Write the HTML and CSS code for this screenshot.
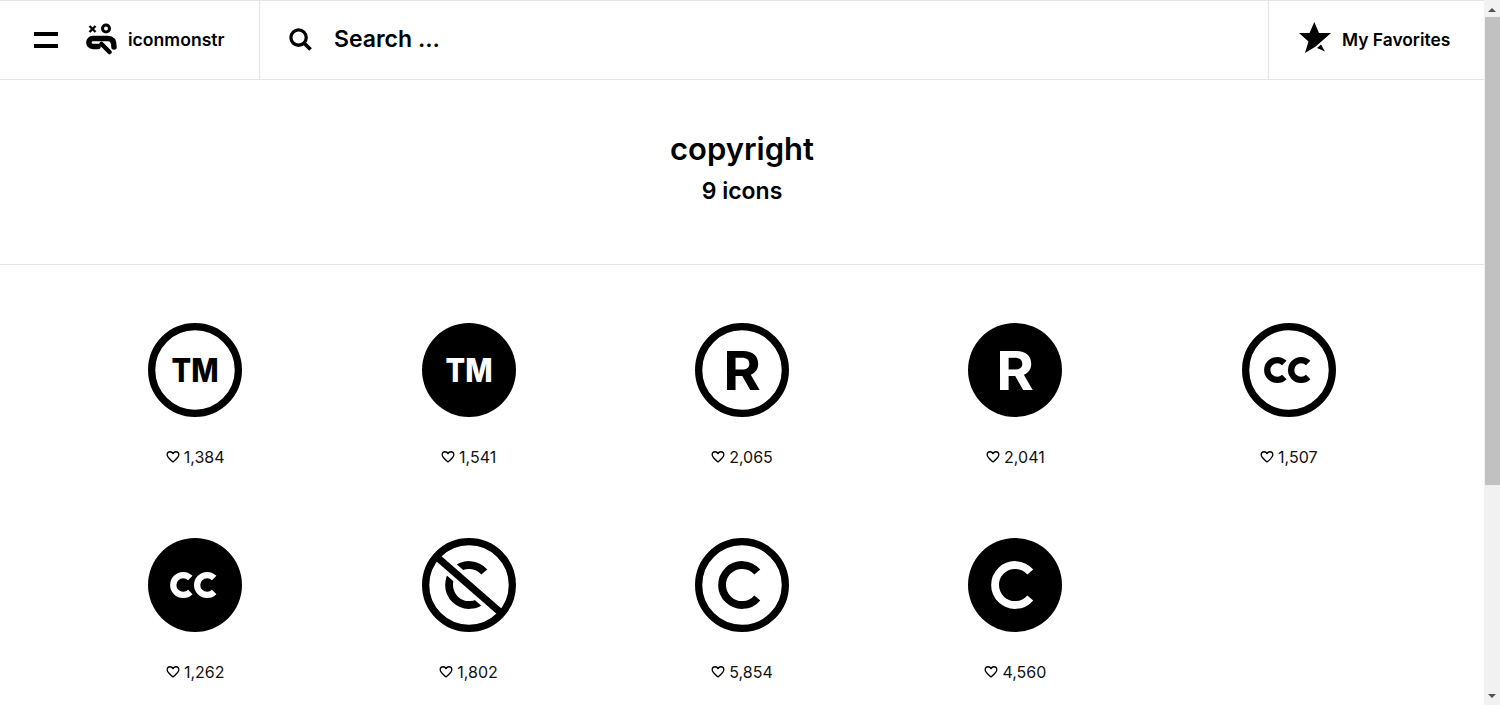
FILE: index.html
```html
<!DOCTYPE html>
<html lang="en">
<head>
    <meta charset="UTF-8">
    <meta name="viewport" content="width=device-width, initial-scale=1.0">
    <title>copyright - iconmonstr</title>
    <link rel="stylesheet" href="styles.css">
</head>
<body>
    <svg class="defs" width="0" height="0">
        <symbol id="heart" viewBox="0 0 24 24">
            <path d="M12 20.5C6 15.5 2 12.3 2 8.2 2 5 4.4 3 7 3c2 0 3.9 1 5 3.2C13.1 4 15 3 17 3c2.6 0 5 2 5 5.2 0 4.1-4 7.3-10 12.3z" fill="none" stroke="#000" stroke-width="2.2" stroke-linejoin="round"/>
        </symbol>
    </svg>

    <div class="page">
        <header class="topbar">
            <div class="brand">
                <button class="menu-btn" aria-label="Menu"></button>
                <a class="logo" href="#">
                    <svg viewBox="0 0 32 32" width="32" height="32">
                        <path d="M4.5 3l6 6M10.5 3l-6 6" stroke="#000" stroke-width="2.3" fill="none"/>
                        <circle cx="21" cy="5.5" r="3.5" stroke="#000" stroke-width="3" fill="none"/>
                        <path d="M29 24c0-5.5-2-8.500-6-8.500H8C2.500 15.500 2.500 23.500 8 23.500H13" stroke="#000" stroke-width="5.5" fill="none" stroke-linecap="round"/>
                        <path d="M16.5 21l8 8" stroke="#000" stroke-width="4.500" fill="none" stroke-linecap="round"/>
                    </svg>
                    <span>iconmonstr</span>
                </a>
            </div>
            <div class="search">
                <svg viewBox="0 0 24 24" width="23" height="23">
                    <circle cx="10" cy="10" r="8" stroke="#000" stroke-width="3.4" fill="none"/>
                    <path d="M15.5 15.5l7 7" stroke="#000" stroke-width="3.8" fill="none"/>
                </svg>
                <span>Search ...</span>
            </div>
            <a class="favorites" href="#">
                <svg class="star" viewBox="0 0 32 32" width="32" height="32">
                    <path d="M15.3 0L20 11H32L16.7 24.5 6 31 9.5 19.5 0 11H10.5z"/>
                    <path d="M22 22.5L26 29.5 18 26z"/>
                </svg>
                <span>My Favorites</span>
            </a>
        </header>

        <section class="title-block">
            <h1>copyright</h1>
            <h2>9 icons</h2>
        </section>

        <ul class="icon-grid">
            <li class="icon-item">
                <svg class="glyph" viewBox="0 0 24 24">
                    <circle class="ring" cx="12" cy="12" r="11.07"/>
                    <text class="mark mark-tm" x="12" y="15.15" textLength="12" lengthAdjust="spacingAndGlyphs">TM</text>
                </svg>
                <p class="likes"><svg><use href="#heart"/></svg>1,384</p>
            </li>
            <li class="icon-item">
                <svg class="glyph" viewBox="0 0 24 24">
                    <circle cx="12" cy="12" r="12"/>
                    <text class="mark mark-tm mark-inv" x="12" y="15.15" textLength="12" lengthAdjust="spacingAndGlyphs">TM</text>
                </svg>
                <p class="likes"><svg><use href="#heart"/></svg>1,541</p>
            </li>
            <li class="icon-item">
                <svg class="glyph" viewBox="0 0 24 24">
                    <circle class="ring" cx="12" cy="12" r="11.07"/>
                    <text class="mark mark-r" x="12" y="17" textLength="9.6" lengthAdjust="spacingAndGlyphs">R</text>
                </svg>
                <p class="likes"><svg><use href="#heart"/></svg>2,065</p>
            </li>
            <li class="icon-item">
                <svg class="glyph" viewBox="0 0 24 24">
                    <circle cx="12" cy="12" r="12"/>
                    <text class="mark mark-r mark-inv" x="12" y="17" textLength="9.6" lengthAdjust="spacingAndGlyphs">R</text>
                </svg>
                <p class="likes"><svg><use href="#heart"/></svg>2,041</p>
            </li>
            <li class="icon-item">
                <svg class="glyph" viewBox="0 0 24 24">
                    <circle class="ring" cx="12" cy="12" r="11.07"/>
                    <path class="arc arc-small" d="M10.8 10.2A2.55 2.55 0 1 0 10.8 13.8M16.9 10.2A2.55 2.55 0 1 0 16.9 13.8"/>
                </svg>
                <p class="likes"><svg><use href="#heart"/></svg>1,507</p>
            </li>
            <li class="icon-item">
                <svg class="glyph" viewBox="0 0 24 24">
                    <circle cx="12" cy="12" r="12"/>
                    <path class="arc arc-small arc-inv" d="M10.8 10.2A2.55 2.55 0 1 0 10.8 13.8M16.9 10.2A2.55 2.55 0 1 0 16.9 13.8"/>
                </svg>
                <p class="likes"><svg><use href="#heart"/></svg>1,262</p>
            </li>
            <li class="icon-item">
                <svg class="glyph" viewBox="0 0 24 24">
                    <path class="arc" d="M15.9 8.7A5.1 5.1 0 1 0 15.9 15.3"/>
                    <path class="slash-gap" d="M4.1 5.1L19.9 18.9"/>
                    <path class="slash" d="M4.1 5.1L19.9 18.9"/>
                    <circle class="ring" cx="12" cy="12" r="11.07"/>
                </svg>
                <p class="likes"><svg><use href="#heart"/></svg>1,802</p>
            </li>
            <li class="icon-item">
                <svg class="glyph" viewBox="0 0 24 24">
                    <circle class="ring" cx="12" cy="12" r="11.07"/>
                    <path class="arc" d="M15.9 8.7A5.1 5.1 0 1 0 15.9 15.3"/>
                </svg>
                <p class="likes"><svg><use href="#heart"/></svg>5,854</p>
            </li>
            <li class="icon-item">
                <svg class="glyph" viewBox="0 0 24 24">
                    <circle cx="12" cy="12" r="12"/>
                    <path class="arc arc-inv" d="M15.9 8.7A5.1 5.1 0 1 0 15.9 15.3"/>
                </svg>
                <p class="likes"><svg><use href="#heart"/></svg>4,560</p>
            </li>
        </ul>
    </div>

    <div class="scrollbar">
        <span class="arrow-up"></span>
        <span class="thumb"></span>
        <span class="arrow-down"></span>
    </div>
</body>
</html>
```

FILE: styles.css
```css
* {
    box-sizing: border-box;
}
html, body {
    height: 705px;
    margin: 0;
    overflow: hidden;
}
body {
    display: flex;
    font-family: Inter, "Liberation Sans", sans-serif;
    color: #000;
    background: #fff;
}
a {
    color: inherit;
    text-decoration: none;
}
.defs {
    position: absolute;
}
.page {
    flex: 1;
    min-width: 0;
}

/* top bar */
.topbar {
    display: flex;
    height: 80px;
    border-top: 1px solid #e5e5e5;
    border-bottom: 1px solid #e5e5e5;
}
.brand {
    display: flex;
    align-items: center;
    width: 260px;
    padding: 0 0 2px 34px;
    border-right: 1px solid #e5e5e5;
}
.menu-btn {
    width: 24px;
    height: 16px;
    padding: 0;
    margin: 2px 27px 0 0;
    border: none;
    border-top: 4px solid #000;
    border-bottom: 4px solid #000;
    background: none;
}
.logo {
    display: flex;
    align-items: center;
    gap: 11px;
    font-size: 17.6px;
    font-weight: 600;
}
.search {
    display: flex;
    align-items: center;
    flex: 1;
    gap: 22px;
    padding: 0 0 2px 29px;
    font-size: 23px;
    font-weight: 600;
}
.favorites {
    display: flex;
    align-items: center;
    gap: 11px;
    width: 216px;
    padding: 0 0 2px 30px;
    border-left: 1px solid #e5e5e5;
    font-size: 17.4px;
    font-weight: 600;
}
.star {
    margin-bottom: 2px;
}

/* heading */
.title-block {
    height: 185px;
    padding-top: 49px;
    border-bottom: 1px solid #e5e5e5;
    text-align: center;
}
.title-block h1 {
    margin: 0;
    font-size: 31px;
    line-height: 40px;
    font-weight: 600;
}
.title-block h2 {
    margin: 7px 0 0;
    font-size: 23px;
    line-height: 30px;
    font-weight: 600;
}

/* icons */
.icon-grid {
    display: grid;
    grid-template-columns: repeat(5, 1fr);
    row-gap: 71px;
    margin: 0;
    padding: 58px 58.5px 0;
    list-style: none;
}
.icon-item {
    display: flex;
    flex-direction: column;
    align-items: center;
}
.glyph {
    display: block;
    width: 94px;
    height: 94px;
}
.ring {
    fill: none;
    stroke: #000;
    stroke-width: 1.85;
}
.mark {
    font-family: Inter, "Liberation Sans", sans-serif;
    font-weight: 800;
    text-anchor: middle;
}
.mark-tm {
    font-size: 8.4px;
}
.mark-r {
    font-size: 13.8px;
    font-weight: 700;
}
.mark-inv {
    fill: #fff;
}
.arc {
    fill: none;
    stroke: #000;
    stroke-width: 2;
}
.arc-small {
    stroke-width: 1.6;
}
.arc-inv {
    stroke: #fff;
}
.slash {
    fill: none;
    stroke: #000;
    stroke-width: 1.8;
}
.slash-gap {
    fill: none;
    stroke: #fff;
    stroke-width: 3.8;
}
.likes {
    display: flex;
    align-items: center;
    gap: 4px;
    margin: 30px 0 0;
    font-size: 16px;
    line-height: 20px;
    color: #111;
}
.likes svg {
    width: 14px;
    height: 14px;
}

/* page scrollbar */
.scrollbar {
    display: flex;
    flex-direction: column;
    align-items: center;
    width: 16px;
    padding-top: 8px;
    background: #f1f1f1;
}
.arrow-up {
    border: 4px solid transparent;
    border-top: none;
    border-bottom: 4px solid #505050;
}
.thumb {
    width: 15px;
    height: 468px;
    margin: 5px 0 0 1px;
    background: #c1c1c1;
}
.arrow-down {
    margin-top: auto;
    margin-bottom: 7px;
    border: 4px solid transparent;
    border-bottom: none;
    border-top: 4px solid #505050;
}
```
